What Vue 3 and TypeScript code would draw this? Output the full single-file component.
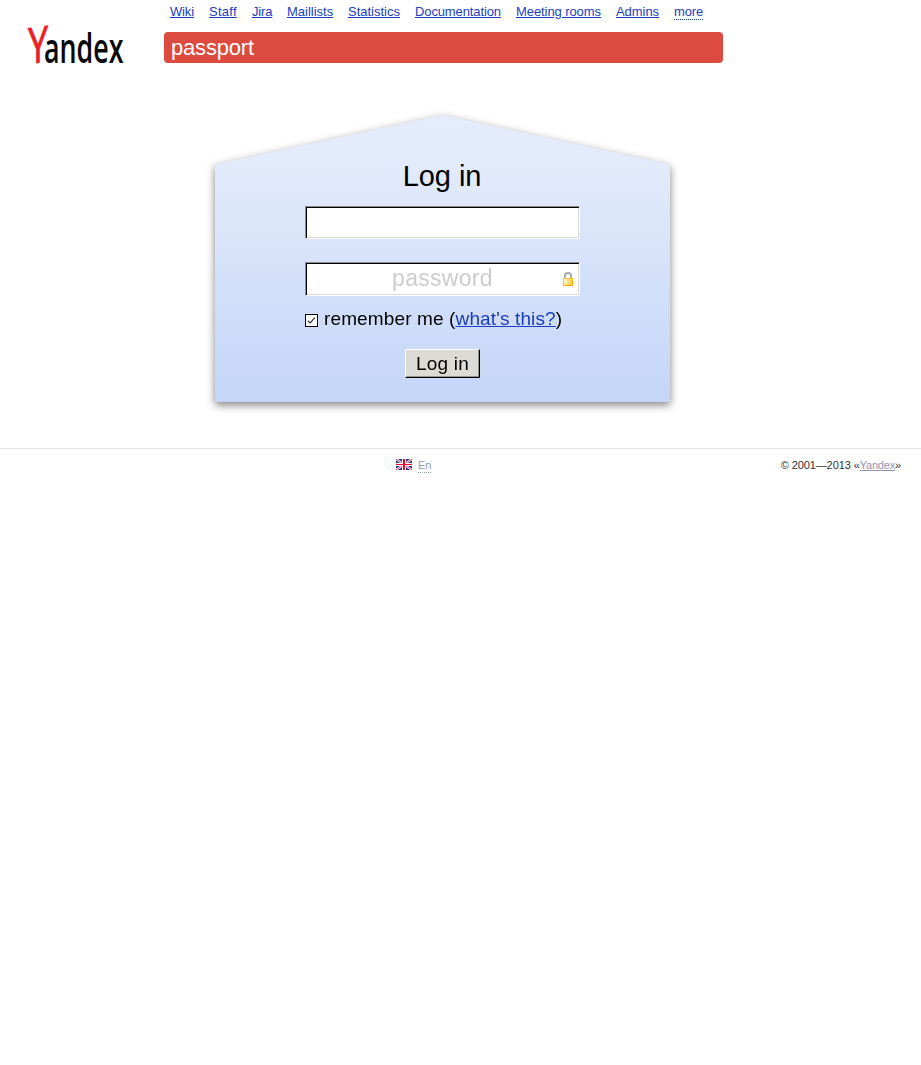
<script setup lang="ts">
import { ref } from 'vue'

const links: string[] = ['Wiki', 'Staff', 'Jira', 'Maillists', 'Statistics', 'Documentation', 'Meeting rooms', 'Admins']
const login = ref('')
const password = ref('')
const remember = ref(true)
</script>

<template>
  <div class="page">
    <header class="header">
      <svg class="logo" width="164" height="100" viewBox="0 0 164 100" role="img" aria-label="Yandex">
        <text class="logo-y" x="28" y="67.4" textLength="20" lengthAdjust="spacingAndGlyphs" transform="skewY(-7)">Y</text>
        <text class="logo-rest" x="44" y="63" textLength="79.5" lengthAdjust="spacingAndGlyphs">andex</text>
      </svg>
      <div class="head-main">
        <nav class="nav">
          <a v-for="l in links" :key="l" href="#">{{ l }}</a>
          <span class="more">more</span>
        </nav>
        <div class="service">passport</div>
      </div>
    </header>

    <main class="shadow">
      <form class="house" @submit.prevent>
        <h1>Log in</h1>
        <input v-model="login" class="field" type="text" aria-label="login" />
        <div class="password">
          <input v-model="password" class="field tall" type="password" placeholder="password" />
          <svg class="lock" width="12" height="15" viewBox="0 0 12 15">
            <defs>
              <linearGradient id="gold" x1="0" y1="0" x2="1" y2="0.4">
                <stop offset="0" stop-color="#fffdf2" />
                <stop offset="1" stop-color="#ffd044" />
              </linearGradient>
              <linearGradient id="rim" x1="0" y1="0" x2="1" y2="1">
                <stop offset="0" stop-color="#ffd21f" />
                <stop offset="1" stop-color="#ff9a08" />
              </linearGradient>
            </defs>
            <path d="M2 6V3.5Q2 1 5 1Q8 1 8 3.5V6" fill="none" stroke="#ababab" stroke-width="2" />
            <rect x=".5" y="6.5" width="9" height="7" fill="url(#gold)" stroke="url(#rim)" />
          </svg>
        </div>
        <div class="remember">
          <label>
            <input v-model="remember" class="native" type="checkbox" />
            <svg class="box" width="13" height="13" viewBox="0 0 13 13">
              <rect x=".5" y=".5" width="12" height="12" fill="#fff" stroke="#000" />
              <path v-if="remember" d="M3 7L5.3 9L9.7 3.6" fill="none" stroke="#333" stroke-width="1.2" />
            </svg>remember me</label> (<a href="#">what's this?</a>)
        </div>
        <button type="submit">Log in</button>
      </form>
    </main>

    <footer class="footer">
      <div class="lang">
        <svg width="16" height="11" viewBox="0 0 16 11">
          <rect width="16" height="11" fill="#1f3a86" />
          <path d="M0 0L16 11M16 0L0 11" stroke="#fff" stroke-width="2.2" />
          <path d="M0 0L16 11M16 0L0 11" stroke="#ee4a70" stroke-width="1" />
          <path d="M8 0V11" stroke="#fff" stroke-width="4" />
          <path d="M0 5.5H16" stroke="#fff" stroke-width="3" />
          <path d="M8 0V11" stroke="#f5002f" stroke-width="2" />
          <path d="M0 5.5H16" stroke="#f5002f" stroke-width="1" />
        </svg>
        <span>En</span>
      </div>
      <div class="copy">© 2001—2013 «<a href="#">Yandex</a>»</div>
    </footer>
  </div>
</template>

<style>
body {
  margin: 0;
  background: #fff;
}
</style>

<style scoped>
.page {
  min-height: 1065px;
  font: 13px/15px "Liberation Sans", Arial, sans-serif;
  color: #000;
}
a {
  color: #1a3dc1;
}
.header {
  display: flex;
  height: 115px;
}
.logo {
  flex: none;
}
.logo-y {
  font: 400 50px "Open Sans", sans-serif;
  fill: #ee1c25;
  stroke: #ee1c25;
  stroke-width: 0.9px;
}
.logo-rest {
  font: 600 42px "Open Sans", sans-serif;
  fill: #080808;
}
.head-main {
  width: 559px;
}
.nav {
  display: flex;
  gap: 15px;
  height: 28px;
  padding: 4px 0 0 6px;
  white-space: nowrap;
}
.nav a:nth-child(1) {
  width: 24px;
  letter-spacing: -0.15px;
}
.nav a:nth-child(2) {
  width: 28px;
  letter-spacing: 0.25px;
}
.nav a:nth-child(3) {
  width: 20px;
  letter-spacing: -0.15px;
}
.nav a:nth-child(4) {
  width: 46px;
}
.nav a:nth-child(5) {
  width: 52px;
}
.nav a:nth-child(6) {
  width: 86px;
  letter-spacing: -0.12px;
}
.nav a:nth-child(7) {
  width: 85px;
  letter-spacing: -0.08px;
}
.nav a:nth-child(8) {
  width: 43px;
  letter-spacing: -0.05px;
}
.more {
  height: 15px;
  border-bottom: 1px dotted #1a3dc1;
  color: #1a3dc1;
  letter-spacing: -0.15px;
}
.service {
  height: 31px;
  padding-left: 7px;
  border-radius: 4px;
  background: #dd4a40;
  color: #fff;
  font-size: 22px;
  line-height: 31px;
  letter-spacing: -0.18px;
}
.shadow {
  width: 455px;
  margin-left: 215px;
  filter: drop-shadow(0 3px 4px rgba(0, 0, 0, 0.5));
}
.house {
  box-sizing: border-box;
  display: flex;
  flex-direction: column;
  align-items: flex-start;
  height: 287px;
  padding: 44px 90px 0;
  background: linear-gradient(#e5ecfc 0%, #e1eafb 22%, #c4d5f7 100%);
  clip-path: polygon(50% 0, 100% 49.5px, 100% 100%, 0 100%, 0 49.5px);
  font-size: 19px;
}
h1 {
  align-self: center;
  margin: 0 1px 13px 0;
  font-size: 29px;
  font-weight: 400;
  line-height: 34px;
  letter-spacing: -0.05px;
}
.field {
  display: block;
  box-sizing: border-box;
  width: 275px;
  height: 33px;
  padding: 0 4px 2px;
  border: 1px solid;
  border-color: #8e8b86 #fff #fff #8e8b86;
  border-radius: 0;
  outline: none;
  background: #fff;
  box-shadow: inset 1px 1px #000, inset -1px -1px #dad9d3;
  font: 23px "Liberation Sans", Arial, sans-serif;
  letter-spacing: 0.3px;
  text-align: center;
}
.field.tall {
  height: 34px;
}
.field::placeholder {
  color: #ccc;
  opacity: 1;
}
.password {
  position: relative;
  margin-top: 23px;
}
.lock {
  position: absolute;
  right: 5px;
  top: 10px;
}
.remember {
  margin-top: 11px;
  height: 24px;
  line-height: 24px;
  letter-spacing: 0.13px;
  white-space: nowrap;
}
.native {
  position: absolute;
  opacity: 0;
}
.box {
  margin-right: 6px;
  vertical-align: -2px;
}
button {
  align-self: center;
  box-sizing: border-box;
  width: 75px;
  height: 29px;
  margin-top: 18px;
  padding: 0;
  border: 1px solid;
  border-color: #fff #000 #000 #fff;
  border-radius: 0;
  background: #dcdbd6;
  box-shadow: inset -1px -1px #95938c;
  color: #000;
  font: 19px/27px "Liberation Sans", Arial, sans-serif;
  letter-spacing: 0.2px;
}
.footer {
  display: grid;
  grid-template-columns: 396px 1fr auto;
  margin-top: 46px;
  padding: 9px 20px 0 0;
  border-top: 1px solid #e6e6e6;
  font-size: 11px;
  line-height: 14px;
}
.lang {
  grid-column: 2;
  display: flex;
  align-items: flex-start;
  gap: 6px;
}
.lang svg {
  margin-top: 1px;
}
.lang span {
  border-bottom: 1px dotted #8c96b2;
  color: #9299b5;
}
.copy {
  color: #333;
  letter-spacing: -0.1px;
}
.copy a {
  color: #8c96b4;
  letter-spacing: -0.2px;
}
</style>
